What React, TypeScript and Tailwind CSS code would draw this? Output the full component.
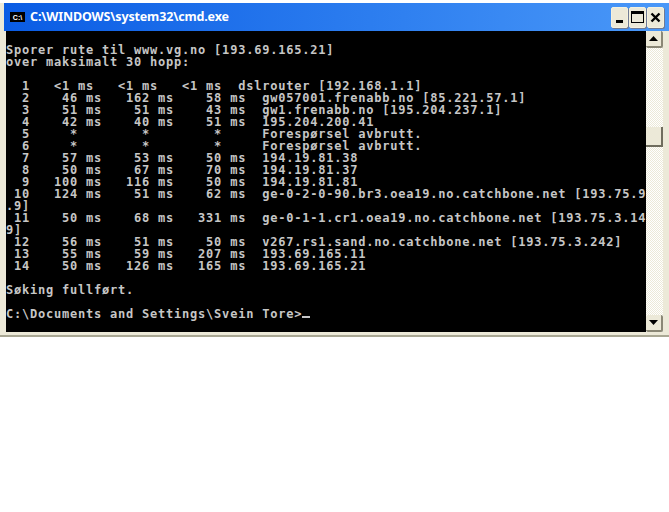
const lines = [
  '',
  'Sporer rute til www.vg.no [193.69.165.21]',
  'over maksimalt 30 hopp:',
  '',
  '  1   <1 ms   <1 ms   <1 ms  dslrouter [192.168.1.1]',
  '  2    46 ms   162 ms    58 ms  gw057001.frenabb.no [85.221.57.1]',
  '  3    51 ms    51 ms    43 ms  gw1.frenabb.no [195.204.237.1]',
  '  4    42 ms    40 ms    51 ms  195.204.200.41',
  '  5     *        *        *     Forespørsel avbrutt.',
  '  6     *        *        *     Forespørsel avbrutt.',
  '  7    57 ms    53 ms    50 ms  194.19.81.38',
  '  8    50 ms    67 ms    70 ms  194.19.81.37',
  '  9   100 ms   116 ms    50 ms  194.19.81.81',
  ' 10   124 ms    51 ms    62 ms  ge-0-2-0-90.br3.oea19.no.catchbone.net [193.75.9',
  '.9]',
  ' 11    50 ms    68 ms   331 ms  ge-0-1-1.cr1.oea19.no.catchbone.net [193.75.3.14',
  '9]',
  ' 12    56 ms    51 ms    50 ms  v267.rs1.sand.no.catchbone.net [193.75.3.242]',
  ' 13    55 ms    59 ms   207 ms  193.69.165.11',
  ' 14    50 ms   126 ms   165 ms  193.69.165.21',
  '',
  'Søking fullført.',
  '',
];

function ScrollButton({ up }: { up: boolean }) {
  return (
    <div className="flex h-[17px] w-[17px] items-center justify-center rounded-[2px] border-r-2 border-b-2 border-[#8a8776] bg-[#ece9d8]">
      <svg width="9" height="5" viewBox="0 0 9 5">
        <path d={up ? 'M4.5 0L9 5H0z' : 'M0 0H9L4.5 5z'} fill="#000" />
      </svg>
    </div>
  );
}

function CaptionButton({ children }: { children: React.ReactNode }) {
  return (
    <div className="flex h-[21px] w-[17px] items-center justify-center rounded-[2px] border border-[#f4f1de] bg-[#ece9d8] shadow-[1px_1px_0_#6f7a94]">
      {children}
    </div>
  );
}

export default function App() {
  return (
    <div className="h-[512px] w-[669px] overflow-hidden bg-white">
      <div className="mt-[3px] flex h-[334px] w-[669px] flex-col border-b-2 border-[#a9a793] bg-[#ece9d8] pb-[3px] pl-[6px] pr-[5px]">
        {/* Title bar */}
        <div className="-ml-[2px] -mr-[5px] flex h-[28px] shrink-0 items-center bg-[linear-gradient(to_right,#0a5ce4,#2f80f0_60%,#4a98f8)] pl-[6px] pr-[5px]">
          <div className="flex h-[10px] w-[15px] items-center justify-center bg-black font-['Liberation_Sans',sans-serif] text-[7px] font-bold leading-none text-white">
            C:\
          </div>
          <span className="ml-[5px] mt-px font-['Noto_Sans',sans-serif] text-[12.5px] font-bold leading-none tracking-[-0.15px] text-white">
            C:\WINDOWS\system32\cmd.exe
          </span>
          <div className="ml-auto flex gap-px">
            <CaptionButton>
              <div className="mt-[9px] h-[3px] w-[7px] bg-black" />
            </CaptionButton>
            <CaptionButton>
              <div className="h-[12px] w-[13px] border border-t-[3px] border-black" />
            </CaptionButton>
            <CaptionButton>
              <svg width="11" height="11" viewBox="0 0 11 11">
                <path d="M1.5 1.5L9.5 9.5M9.5 1.5L1.5 9.5" stroke="#000" strokeWidth="2.4" />
              </svg>
            </CaptionButton>
          </div>
        </div>
        <div className="flex min-h-0 flex-1">
          {/* Console */}
          <pre className="w-[640px] shrink-0 overflow-hidden bg-black pt-[1px] font-['DejaVu_Sans_Mono',monospace] text-[12px] font-bold leading-[12px] tracking-[0.78px] text-[#c6c6c6]">
            {lines.map((l, i) => (
              <div key={i} className="h-[12px]">
                {l}
              </div>
            ))}
            <div className="h-[12px]">
              C:\Documents and Settings\Svein Tore&gt;
              <span className="inline-block h-[2px] w-[8px] bg-[#c6c6c6] align-baseline" />
            </div>
          </pre>
          {/* Scrollbar */}
          <div className="flex w-[17px] shrink-0 flex-col bg-[repeating-conic-gradient(#ece9d8_0_25%,#ffffff_0_50%)] bg-[length:2px_2px]">
            <ScrollButton up />
            <div className="mt-[79px] h-[20px] w-[17px] border-r-2 border-b-2 border-[#6f6d5e] bg-[#ece9d8]" />
            <div className="flex-1" />
            <ScrollButton up={false} />
          </div>
        </div>
      </div>
    </div>
  );
}
